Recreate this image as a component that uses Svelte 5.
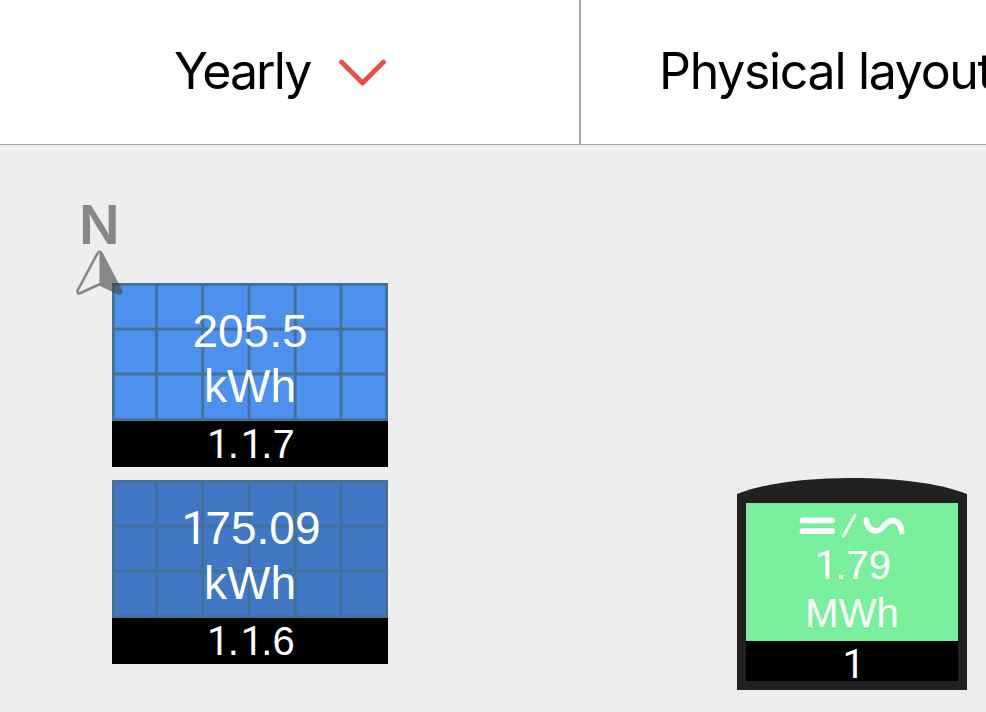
<script>
  let panels = $state([
    { id: '1.1.7', value: '205.5', unit: 'kWh', x: 112, y: 138, color: '#4d90ed' },
    { id: '1.1.6', value: '175.09', unit: 'kWh', x: 112, y: 335, color: '#4078c5' },
  ]);

  let inverter = $state({ id: '1', value: '1.79', unit: 'MWh', x: 737, y: 333 });

  // grid lines of a 6x3 cell module
  const columns = [44.5, 90.7, 137, 183.3, 229];
  const rows = [46, 91];
</script>

{#snippet digits(text)}{#each text.split('') as c}{#if c === '1'}<span class="one">1</span>{:else}{c}{/if}{/each}{/snippet}

<main>
  <header>
    <div class="tab period">
      <span class="yearly">Yearly</span>
      <svg class="chevron" width="48" height="30" viewBox="0 0 48 30">
        <path d="M3.5 5 L24.5 26 L45.5 5" />
      </svg>
    </div>
    <div class="tab view">
      <span>Physical layout</span>
    </div>
  </header>

  <section class="layout">
    {#each panels as panel}
      <div class="panel" style="left: {panel.x}px; top: {panel.y}px">
        <div class="cells" style="background: {panel.color}">
          <svg class="grid" width="276" height="138" viewBox="0 0 276 138">
            <rect x="1.4" y="1.4" width="273.2" height="135.2" />
            {#each columns as x}
              <line x1={x} y1="0" x2={x} y2="138" />
            {/each}
            {#each rows as y}
              <line x1="0" y1={y} x2="276" y2={y} />
            {/each}
          </svg>
          <div class="value">{@render digits(panel.value)}</div>
          <div class="value">{panel.unit}</div>
        </div>
        <div class="label">{@render digits(panel.id)}</div>
      </div>
    {/each}

    <!-- Compass -->
    <svg class="compass" width="60" height="120" viewBox="0 -20 60 120">
      <text x="29.4" y="43" text-anchor="middle">N</text>
      <path class="needle" d="M29.5 50.5 Q28.3 50.5 27.5 52.3 L7.6 89.5 Q6.8 92.9 10 92.3 L29.5 83.3 L48.6 92.3 Q51.8 92.9 51 89.5 L31.5 52.3 Q30.7 50.5 29.5 50.5 Z" />
      <path class="half" d="M29.5 50.5 L31.5 52.3 L51 89.5 Q51.8 92.9 48.6 92.3 L29.5 83.3 Z" />
    </svg>

    <!-- Inverter -->
    <div class="inverter" style="left: {inverter.x}px; top: {inverter.y}px">
      <svg class="cap" width="230" height="25" viewBox="0 0 230 25">
        <path d="M0 16 C28 5 70 0 115 0 C160 0 202 5 230 16 V25 H0 Z" />
      </svg>
      <div class="body">
        <div class="screen">
          <svg class="dcac" width="212" height="38" viewBox="0 0 212 38">
            <path d="M56.5 17.4 H86 M56.5 28.2 H86" stroke-width="5.8" />
            <path d="M97.3 33.3 L109 12.3" stroke-width="2.8" />
            <path d="M120.3 17 C120.8 24 125.5 28.2 130.5 27.8 C138 27.2 138.5 17.8 146.5 17.6 C151.5 17.6 155.2 21.5 155.7 28.6" stroke-width="5.6" />
          </svg>
          <div>{@render digits(inverter.value)}</div>
          <div>{inverter.unit}</div>
        </div>
        <div class="label small">{@render digits(inverter.id)}</div>
      </div>
    </div>
  </section>
</main>

<style>
  :global(body) {
    margin: 0;
    overflow: hidden;
    background: #eeeeee;
  }

  main {
    width: 100%;
    height: 712px;
    overflow: hidden;
    background: #eeeeee;
    font-family: 'Liberation Sans', Arial, sans-serif;
  }

  header {
    display: flex;
    box-sizing: border-box;
    height: 145px;
    border-bottom: 1px solid #a6a6a6;
    background: #fff;
    font-family: Inter, sans-serif;
    font-size: 50px;
    letter-spacing: -1.3px;
    color: #000;
    overflow: hidden;
  }

  .tab {
    display: flex;
    align-items: center;
    box-sizing: border-box;
    white-space: nowrap;
    flex: none;
  }

  .tab span {
    padding-bottom: 2px;
  }

  .period {
    width: 581px;
    padding-left: 174px;
    border-right: 2px solid #a9a9a9;
  }

  .yearly {
    width: 164px;
    letter-spacing: -1.9px;
  }

  .view {
    width: 580px;
    padding-left: 78px;
  }

  .chevron path {
    fill: none;
    stroke: #eb4b42;
    stroke-width: 4.8;
    stroke-linecap: round;
    stroke-linejoin: round;
  }

  .layout {
    position: relative;
    height: 567px;
  }

  .panel,
  .inverter {
    position: absolute;
    text-align: center;
    color: #fff;
  }

  .panel {
    width: 276px;
  }

  .cells {
    position: relative;
    box-sizing: border-box;
    height: 138px;
    padding-top: 21px;
  }

  .grid {
    position: absolute;
    left: 0;
    top: 0;
    fill: none;
    stroke: #437099;
    stroke-width: 2.8;
  }

  .value {
    position: relative;
    height: 55px;
    font-size: 46px;
    line-height: 55px;
  }

  .one {
    position: relative;
    left: 0.045em;
    font-family: Roboto, sans-serif;
    line-height: 1;
  }

  .label {
    height: 46px;
    background: #000;
    font-size: 40px;
    line-height: 46px;
  }

  .small {
    height: 40px;
  }

  .compass {
    position: absolute;
    left: 70px;
    top: 36px;
    opacity: 0.6;
  }

  .compass text {
    font-family: Inter, sans-serif;
    font-size: 53.5px;
    font-weight: 600;
    fill: #444;
  }

  .needle {
    fill: none;
    stroke: #444;
    stroke-width: 2.6;
    stroke-linejoin: round;
  }

  .half {
    fill: #444;
  }

  .inverter {
    width: 230px;
  }

  .cap {
    display: block;
    fill: #232021;
  }

  .body {
    padding: 0 9px 9px;
    background: #232021;
  }

  .screen {
    height: 138px;
    background: #78f09b;
    font-size: 40px;
    line-height: 48px;
  }

  .dcac {
    display: block;
    fill: none;
    stroke: #fff;
    stroke-linecap: round;
  }
</style>
